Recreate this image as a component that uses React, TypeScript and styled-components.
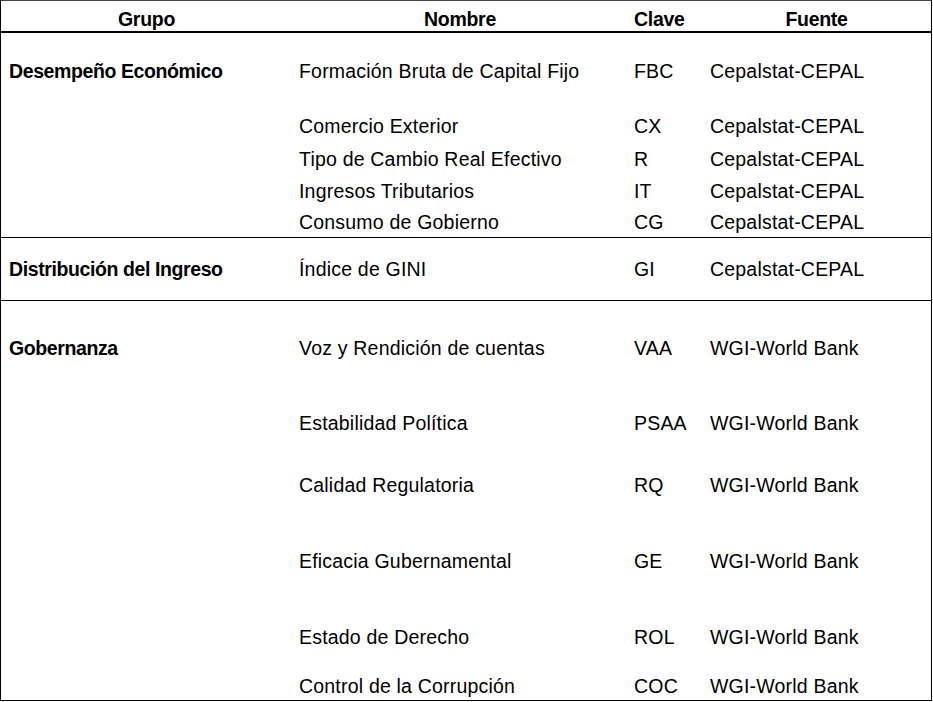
import { createGlobalStyle } from "styled-components";
import styled from "styled-components";

const GlobalStyle = createGlobalStyle`
  html, body {
    margin: 0;
    padding: 0;
    background: #ffffff;
  }
  body {
    font-family: "Liberation Sans", Arial, sans-serif;
    color: #000;
  }
`;

type Row = { nombre: string; clave: string; fuente: string; h: number };
type Group = { grupo: string; rows: Row[] };

const CEPAL = "Cepalstat-CEPAL";
const WGI = "WGI-World Bank";

const groups: Group[] = [
  {
    grupo: "Desempeño Económico",
    rows: [
      { nombre: "Formación Bruta de Capital Fijo", clave: "FBC", fuente: CEPAL, h: 76 },
      { nombre: "Comercio Exterior", clave: "CX", fuente: CEPAL, h: 34 },
      { nombre: "Tipo de Cambio Real Efectivo", clave: "R", fuente: CEPAL, h: 32 },
      { nombre: "Ingresos Tributarios", clave: "IT", fuente: CEPAL, h: 32 },
      { nombre: "Consumo de Gobierno", clave: "CG", fuente: CEPAL, h: 30 },
    ],
  },
  {
    grupo: "Distribución del Ingreso",
    rows: [{ nombre: "Índice de GINI", clave: "GI", fuente: CEPAL, h: 62 }],
  },
  {
    grupo: "Gobernanza",
    rows: [
      { nombre: "Voz y Rendición de cuentas", clave: "VAA", fuente: WGI, h: 94 },
      { nombre: "Estabilidad Política", clave: "PSAA", fuente: WGI, h: 56 },
      { nombre: "Calidad Regulatoria", clave: "RQ", fuente: WGI, h: 68 },
      { nombre: "Eficacia Gubernamental", clave: "GE", fuente: WGI, h: 84 },
      { nombre: "Estado de Derecho", clave: "ROL", fuente: WGI, h: 68 },
      { nombre: "Control de la Corrupción", clave: "COC", fuente: WGI, h: 29 },
    ],
  },
];

const App = () => {
  return (
    <>
      <GlobalStyle />
      <Table>
        <HeaderRow>
          <HeadCell>Grupo</HeadCell>
          <HeadCell>Nombre</HeadCell>
          <HeadCell $left>Clave</HeadCell>
          <HeadCell>Fuente</HeadCell>
        </HeaderRow>
        {groups.map((g) => (
          <Section key={g.grupo}>
            {g.rows.map((r, i) => (
              <DataRow key={r.clave} $h={r.h}>
                <GroupCell>{i === 0 ? g.grupo : ""}</GroupCell>
                <Cell>{r.nombre}</Cell>
                <Cell $pad={6}>{r.clave}</Cell>
                <Cell $pad={8}>{r.fuente}</Cell>
              </DataRow>
            ))}
          </Section>
        ))}
      </Table>
    </>
  );
};
export default App;

const Table = styled.div`
  width: 932px;
  box-sizing: border-box;
  border-left: 1px solid #000;
  border-right: 1px solid #000;
  border-top: 1px solid #444;
  font-size: 19.5px;
  display: flex;
  flex-direction: column;
`;

const columns = "291px 336px 74px 229px";

const HeaderRow = styled.div`
  display: grid;
  grid-template-columns: ${columns};
  height: 32px;
  box-sizing: border-box;
  border-bottom: 2px solid #000;
  align-items: center;
  padding-top: 6px;
`;

const HeadCell = styled.div<{ $left?: boolean }>`
  font-weight: bold;
  letter-spacing: -0.3px;
  text-align: ${(p) => (p.$left ? "left" : "center")};
  padding-left: ${(p) => (p.$left ? "6px" : "0")};
  line-height: 20px;
`;

const Section = styled.div`
  border-bottom: 1px solid #000;
`;

const DataRow = styled.div<{ $h: number }>`
  display: grid;
  grid-template-columns: ${columns};
  height: ${(p) => p.$h}px;
  align-items: center;
`;

const Cell = styled.div<{ $pad?: number }>`
  padding-left: ${(p) => p.$pad ?? 7}px;
  line-height: 20px;
  letter-spacing: 0.2px;
  white-space: nowrap;
`;

const GroupCell = styled(Cell)`
  padding-left: 8px;
  font-weight: bold;
  letter-spacing: -0.4px;
`;
